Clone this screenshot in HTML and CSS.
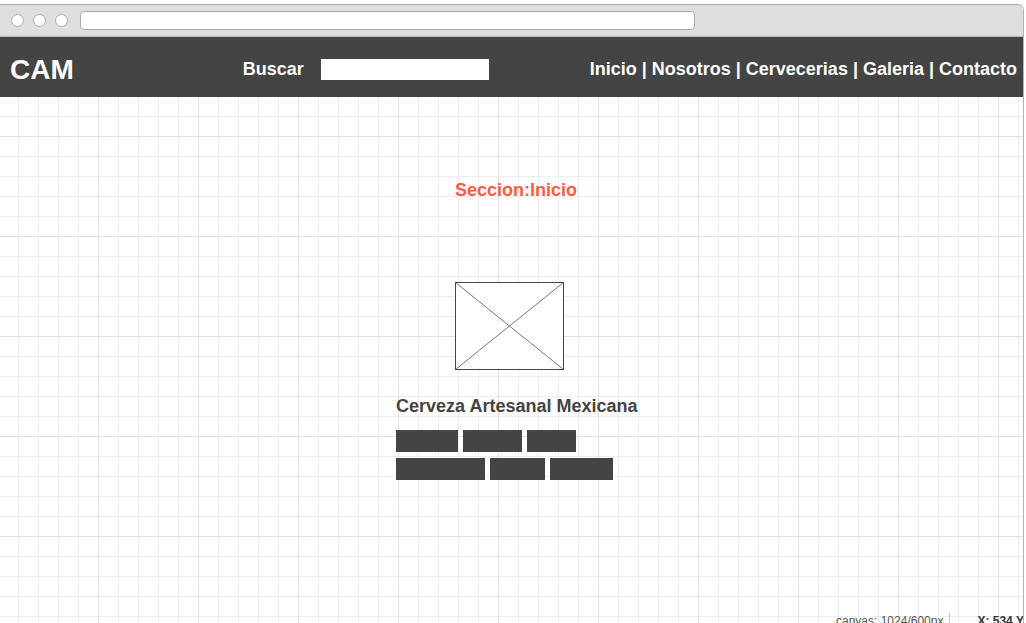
FILE: index.html
```html
<!DOCTYPE html>
<html lang="es">
<head>
<meta charset="utf-8">
<title>CAM - Inicio</title>
<link rel="stylesheet" href="styles.css">
</head>
<body>
<div class="window">
  <div class="chrome">
    <div class="dots">
      <span class="dot"></span>
      <span class="dot"></span>
      <span class="dot"></span>
    </div>
    <div class="url"></div>
  </div>
  <header class="header">
    <div class="logo">CAM</div>
    <div class="search">
      <span class="search-label">Buscar</span>
      <span class="search-box"></span>
    </div>
    <nav class="nav">Inicio | Nosotros | Cervecerias | Galeria | Contacto</nav>
  </header>
  <main class="stage">
    <div class="content">
      <h2 class="section-title">Seccion:Inicio</h2>
      <svg class="placeholder" width="109" height="88" viewBox="0 0 109 88">
        <rect x="0.5" y="0.5" width="108" height="87" fill="#fff" stroke="#444" stroke-width="1"/>
        <line x1="0.5" y1="0.5" x2="108.5" y2="87.5" stroke="#555" stroke-width="0.8"/>
        <line x1="108.5" y1="0.5" x2="0.5" y2="87.5" stroke="#555" stroke-width="0.8"/>
      </svg>
      <h1 class="headline">Cerveza Artesanal Mexicana</h1>
      <div class="blocks">
        <div class="block-row">
          <span class="block w62"></span>
          <span class="block w59"></span>
          <span class="block w49"></span>
        </div>
        <div class="block-row">
          <span class="block w89"></span>
          <span class="block w55"></span>
          <span class="block w63"></span>
        </div>
      </div>
    </div>
    <div class="status">
      <span class="status-size">canvas: 1024/600px</span>
      <span class="status-coords">X: 534 Y: 310</span>
    </div>
  </main>
</div>
</body>
</html>
```
FILE: styles.css
```css
html, body {
  margin: 0;
  padding: 0;
  background: #fff;
  overflow: hidden;
}

body {
  font-family: "Liberation Sans", Arial, Helvetica, sans-serif;
}

.window {
  width: 1023px;
  height: 618px;
  margin-top: 4px;
  border-top: 1px solid #a8a8a8;
  border-right: 1px solid #b4b4b4;
  border-top-right-radius: 6px;
  overflow: hidden;
  display: flex;
  flex-direction: column;
}

/* browser chrome */
.chrome {
  height: 31px;
  flex: none;
  background: #dedede;
  border-bottom: 1px solid #b9b9b9;
  display: flex;
  align-items: center;
  padding-left: 11px;
  box-sizing: content-box;
}

.dots {
  display: flex;
  gap: 9px;
}

.dot {
  width: 11px;
  height: 11px;
  border: 1px solid #ababab;
  border-radius: 50%;
  background: #fff;
}

.url {
  width: 613px;
  height: 17px;
  margin-left: 12px;
  background: #fff;
  border: 1px solid #aaa;
  border-radius: 4px;
}

/* site header */
.header {
  height: 60px;
  flex: none;
  box-sizing: border-box;
  background: #444;
  color: #fff;
  font-weight: bold;
  display: flex;
  align-items: center;
  padding: 4px 6px 0 10px;
}

.logo {
  font-size: 28px;
  line-height: 32px;
  padding-top: 1px;
}

.search {
  display: flex;
  align-items: center;
  gap: 17px;
  margin-left: 169px;
}

.search-label {
  font-size: 18px;
  line-height: 22px;
}

.search-box {
  width: 168px;
  height: 21px;
  background: #fff;
}

.nav {
  margin-left: auto;
  font-size: 18px;
  line-height: 22px;
  white-space: pre;
}

/* grid canvas */
.stage {
  position: relative;
  flex: 1;
  background-color: #fff;
  background-image:
    linear-gradient(to right, #e2e2e2 1px, transparent 1px),
    linear-gradient(to bottom, #e2e2e2 1px, transparent 1px),
    linear-gradient(to right, #ededed 1px, transparent 1px),
    linear-gradient(to bottom, #ededed 1px, transparent 1px);
  background-size: 100px 100px, 100px 100px, 20px 20px, 20px 20px;
  background-position: 98px 0, 0 39px, 18px 0, 0 19px;
}

.content {
  padding: 82px 0 0 396px;
  display: flex;
  flex-direction: column;
  align-items: flex-start;
}

.section-title {
  margin: 0 0 0 59px;
  font-size: 18px;
  line-height: 22px;
  font-weight: bold;
  color: #ff5b3e;
}

.placeholder {
  display: block;
  margin: 81px 0 0 59px;
}

.headline {
  margin: 25px 0 0 0;
  font-size: 18px;
  line-height: 22px;
  font-weight: bold;
  color: #444;
}

.blocks {
  margin-top: 13px;
  display: flex;
  flex-direction: column;
  gap: 6px;
}

.block-row {
  display: flex;
  gap: 5px;
}

.block {
  height: 22px;
  background: #444;
}

.w62 { width: 62px; }
.w59 { width: 59px; }
.w49 { width: 49px; }
.w89 { width: 89px; }
.w55 { width: 55px; }
.w63 { width: 63px; }

/* editor status overlay */
.status {
  position: absolute;
  top: 516px;
  left: 836px;
  display: flex;
  font-size: 12px;
  line-height: 14px;
  color: #555;
  white-space: nowrap;
}

.status-size {
  padding: 1px 6px 0 0;
}

.status-coords {
  padding: 1px 0 0 27px;
  border-left: 1px solid #c8c8c8;
  font-weight: bold;
  color: #333;
  height: 20px;
}
```
